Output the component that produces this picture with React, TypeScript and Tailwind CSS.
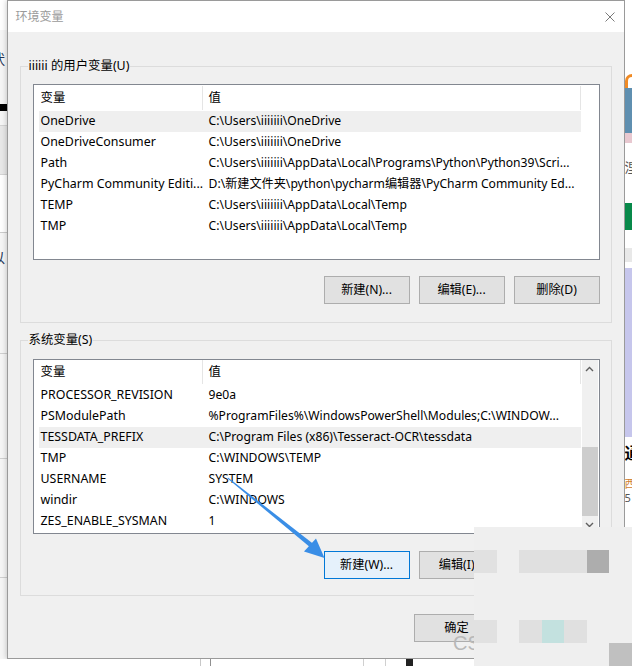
import React from "react";

const FONT = "font-['Noto_Sans','Noto_Sans_CJK_SC',sans-serif]";

type Row = { name: string; value: string; sel?: boolean };

const userRows: Row[] = [
  { name: "OneDrive", value: "C:\\Users\\iiiiiii\\OneDrive", sel: true },
  { name: "OneDriveConsumer", value: "C:\\Users\\iiiiiii\\OneDrive" },
  { name: "Path", value: "C:\\Users\\iiiiiii\\AppData\\Local\\Programs\\Python\\Python39\\Scri..." },
  { name: "PyCharm Community Editi...", value: "D:\\新建文件夹\\python\\pycharm编辑器\\PyCharm Community Ed..." },
  { name: "TEMP", value: "C:\\Users\\iiiiiii\\AppData\\Local\\Temp" },
  { name: "TMP", value: "C:\\Users\\iiiiiii\\AppData\\Local\\Temp" },
];

const sysRows: Row[] = [
  { name: "PROCESSOR_REVISION", value: "9e0a" },
  { name: "PSModulePath", value: "%ProgramFiles%\\WindowsPowerShell\\Modules;C:\\WINDOW..." },
  { name: "TESSDATA_PREFIX", value: "C:\\Program Files (x86)\\Tesseract-OCR\\tessdata", sel: true },
  { name: "TMP", value: "C:\\WINDOWS\\TEMP" },
  { name: "USERNAME", value: "SYSTEM" },
  { name: "windir", value: "C:\\WINDOWS" },
  { name: "ZES_ENABLE_SYSMAN", value: "1" },
];

function ListRows({ rows }: { rows: Row[] }) {
  return (
    <div className="flex flex-col pl-[5px]">
      <div className="flex h-[25px] w-[542px] items-center pb-[1px] text-[12.4px] text-black">
        <div className="flex h-full w-[164px] items-center border-r border-[#e5e5e5] pl-[2px]">变量</div>
        <div className="flex h-full flex-1 items-center border-r border-[#e5e5e5] pl-[6px]">值</div>
      </div>
      {rows.map((r, i) => (
        <div
          key={i}
          className={
            "flex h-[21px] w-[542px] items-center pb-[1px] text-black " + (r.sel ? "bg-[#efefef]" : "")
          }
        >
          <div className="w-[164px] overflow-hidden whitespace-nowrap pl-[2px] text-[12.4px]">{r.name}</div>
          <div className="flex-1 overflow-hidden whitespace-nowrap pl-[6px] text-[12.15px]">{r.value}</div>
        </div>
      ))}
    </div>
  );
}

function Chevron({ up }: { up?: boolean }) {
  return (
    <svg width="9" height="6" viewBox="0 0 9 6">
      <path
        d={up ? "M1 5 L4.5 1.5 L8 5" : "M1 1 L4.5 4.5 L8 1"}
        fill="none"
        stroke="#606060"
        strokeWidth="1.4"
      />
    </svg>
  );
}

function Button({ label, focused }: { label: string; focused?: boolean }) {
  return (
    <div
      className={
        "flex h-[28px] w-[86px] items-center justify-center border text-[12.2px] text-black " +
        (focused ? "border-[#0078d7] bg-[#e5f1fb]" : "border-[#adadad] bg-[#e1e1e1]")
      }
    >
      {label}
    </div>
  );
}

function GroupBox({
  label,
  children,
  className,
}: {
  label: string;
  children: React.ReactNode;
  className: string;
}) {
  return (
    <div className={"relative border border-[#dcdcdc] " + className}>
      <span className="absolute left-[7px] top-[-9px] bg-[#f0f0f0] px-[1px] text-[12.4px] leading-[16px] text-black">
        {label}
      </span>
      {children}
    </div>
  );
}

function LeftStrip() {
  return (
    <div className="flex h-full w-[7px] flex-col overflow-hidden bg-[#f6f6f6]">
      <div className="h-[30px] bg-white" />
      <div className="h-[20px]" />
      <div className="ml-[-9px] h-[18px] text-[14px] leading-[18px] text-[#223355]">状</div>
      <div className="h-[36px]" />
      <div className="h-[7px] bg-black" />
      <div className="h-[14px]" />
      <div className="h-[50px] border-y border-[#d4d4d4] bg-[#e8e8e8]" />
      <div className="h-[57px] bg-white" />
      <div className="h-[1px] bg-[#cccccc]" />
      <div className="h-[16px]" />
      <div className="ml-[-9px] h-[18px] text-[14px] leading-[18px] text-[#223355]">以</div>
      <div className="h-[86px]" />
      <div className="h-[1px] bg-[#d0d0d0]" />
      <div className="h-[104px]" />
      <div className="h-[1px] bg-[#d0d0d0]" />
      <div className="h-[118px]" />
      <div className="h-[1px] bg-[#d0d0d0]" />
    </div>
  );
}

function RightStrip() {
  return (
    <div className="flex h-full w-[8px] flex-col overflow-hidden bg-white">
      <div className="h-[74px]" />
      <div className="h-[14px] rounded-tl-full border-l-[3px] border-t-[3px] border-[#f08a24]" />
      <div className="h-[45px] bg-[#5f8fb0]" />
      <div className="h-[10px] bg-[#e8c8d0]" />
      <div className="h-[15px]" />
      <div className="h-[18px] text-[13px] leading-[18px] text-[#555]">浬</div>
      <div className="h-[27px]" />
      <div className="h-[27px] bg-[#08894a]" />
      <div className="h-[18px]" />
      <div className="h-[14px] bg-[#e8e8e8]" />
      <div className="h-[6px]" />
      <div className="h-[169px] bg-[#c6c6ec]" />
      <div className="h-[6px]" />
      <div className="h-[20px] text-[16px] font-bold leading-[20px] text-black">通</div>
      <div className="h-[14px]" />
      <div className="h-[14px] text-[11px] leading-[14px] text-[#d08030]">西</div>
      <div className="h-[14px] text-[11px] leading-[14px] text-[#555]">5</div>
    </div>
  );
}

export default function App() {
  return (
    <div className={"relative flex h-[666px] w-[632px] flex-col overflow-hidden bg-white text-[12px] " + FONT}>
      <div className="flex h-[659px]">
        <LeftStrip />
        {/* dialog window */}
        <div className="flex h-[659px] w-[618px] flex-col border border-[#9a9a9a] bg-[#f0f0f0] shadow-[0_0_6px_rgba(0,0,0,0.25)]">
          <div className="flex h-[31px] items-center justify-between bg-white pl-[8px] pr-[9px]">
            <span className="text-[12px] text-[#9a9a9a]">环境变量</span>
            <svg width="10" height="10" viewBox="0 0 10 10">
              <path d="M0.5 0.5 L9.5 9.5 M9.5 0.5 L0.5 9.5" stroke="#7a7a7a" strokeWidth="1" />
            </svg>
          </div>
          <div className="flex flex-col px-[12px]">
            <GroupBox label="iiiiii 的用户变量(U)" className="mt-[34px] pb-[18px] pl-[12px] pr-[11px] pt-[17px]">
              <div className="h-[176px] w-[567px] border border-[#828790] bg-white pt-[1px]">
                <ListRows rows={userRows} />
              </div>
              <div className="mt-[16px] flex justify-end gap-[9px]">
                <Button label="新建(N)..." />
                <Button label="编辑(E)..." />
                <Button label="删除(D)" />
              </div>
            </GroupBox>
            <GroupBox label="系统变量(S)" className="mt-[17px] pb-[16px] pl-[12px] pr-[11px] pt-[18px]">
              <div className="flex h-[175px] w-[567px] border border-[#828790] bg-white">
                <div className="w-[548px] overflow-hidden">
                  <ListRows rows={sysRows} />
                </div>
                <div className="flex w-[16px] flex-col bg-[#f0f0f0]">
                  <div className="flex h-[17px] items-center justify-center">
                    <Chevron up />
                  </div>
                  <div className="flex flex-1 flex-col justify-end">
                    <div className="h-[69px] bg-[#cdcdcd]" />
                  </div>
                  <div className="flex h-[17px] items-center justify-center">
                    <Chevron />
                  </div>
                </div>
              </div>
              <div className="mt-[17px] flex justify-end gap-[9px]">
                <Button label="新建(W)..." focused />
                <Button label="编辑(I)..." />
                <Button label="删除(L)" />
              </div>
            </GroupBox>
            <div className="mt-[18px] flex justify-end gap-[9px] pr-[17px]">
              <Button label="确定" />
              <Button label="取消" />
            </div>
          </div>
        </div>
        <RightStrip />
      </div>
      {/* bottom strip of the desktop behind */}
      <div className="flex h-[7px] bg-white">
        <div className="w-[200px]" />
        <div className="w-[1px] bg-[#c8c8c8]" />
        <div className="w-[9px]" />
        <div className="w-[1px] bg-[#909090]" />
        <div className="w-[152px]" />
        <div className="w-[1px] bg-[#d0d0d0]" />
        <div className="w-[21px]" />
        <div className="w-[1px] bg-[#d0d0d0]" />
        <div className="w-[20px]" />
        <div className="w-[7px] bg-[#222]" />
      </div>

      {/* watermark */}
      <div className="pointer-events-none absolute left-[453px] top-[633px] font-['Liberation_Sans',sans-serif] text-[20px] leading-[20px] text-[#b8b8b8]">
        CS
      </div>

      {/* annotation arrow */}
      <svg className="pointer-events-none absolute left-0 top-0" width="632" height="666" viewBox="0 0 632 666">
        <polygon points="228,477.5 312.5,543.2 309.5,546.8 227.5,478.5" fill="#3a8ee6" />
        <polygon points="324.5,558 304,551.5 316,538.5" fill="#3a8ee6" />
      </svg>

      {/* mosaic blur overlay */}
      <div className="absolute left-[474px] top-[527px] grid h-[139px] w-[158px] grid-cols-7 grid-rows-6 bg-[#efefef]">
        <div /><div /><div /><div /><div /><div /><div />
        <div className="bg-[#e1e1e1]" /><div /><div className="bg-[#e0e0e0]" /><div className="bg-[#e0e0e0]" /><div className="bg-[#e0e0e0]" /><div className="bg-[#adadad]" /><div />
        <div /><div /><div /><div /><div /><div /><div />
        <div /><div /><div /><div /><div /><div /><div />
        <div className="bg-[#e1e1e1]" /><div /><div className="bg-[#e0e0e0]" /><div className="bg-[#c3e1df]" /><div className="bg-[#e0e0e0]" /><div /><div />
        <div /><div /><div /><div /><div /><div /><div className="bg-[#c0c0c0]" />
      </div>
    </div>
  );
}
